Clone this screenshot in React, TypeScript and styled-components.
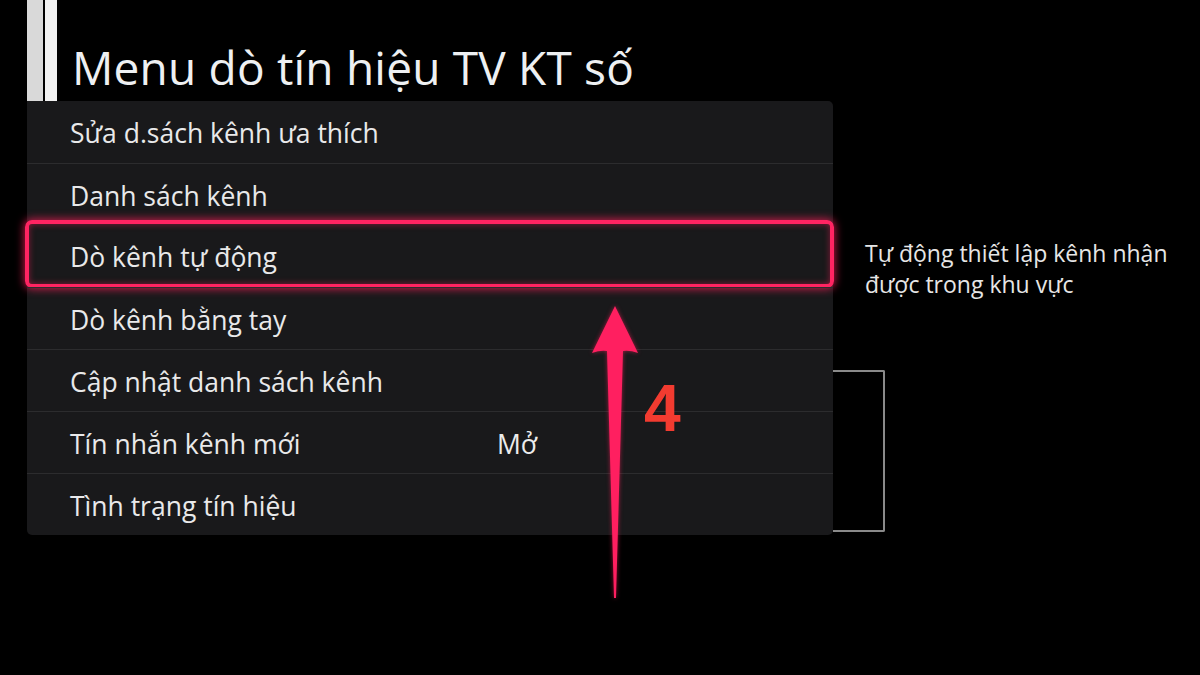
import { createGlobalStyle, styled } from 'styled-components';

const GlobalStyle = createGlobalStyle`
  html, body {
    margin: 0;
    padding: 0;
    background: #000;
  }
  body {
    font-family: 'Open Sans', 'Noto Sans', sans-serif;
  }
`;

const Screen = styled.div`
  width: 1200px;
  height: 675px;
  background: #000;
  position: relative;
  overflow: hidden;
  padding-left: 27px;
  box-sizing: border-box;
`;

const Header = styled.header`
  height: 101px;
  display: flex;
  align-items: flex-end;
`;

const Bar = styled.div<{ $w: number; $color: string }>`
  width: ${(p) => p.$w}px;
  height: 100%;
  background: ${(p) => p.$color};
  margin-right: 2px;
`;

const Title = styled.h1`
  margin: 0 0 6px 13px;
  font-size: 46px;
  font-weight: 400;
  line-height: 1.2;
  color: #eef0f2;
  letter-spacing: 0.2px;
`;

const Body = styled.div`
  display: flex;
  align-items: flex-start;
`;

const Panel = styled.ul`
  list-style: none;
  margin: 0;
  padding: 0;
  width: 806px;
  background: #19191b;
  border-radius: 0 5px 5px 5px;
`;

const Row = styled.li<{ $active?: boolean }>`
  position: relative;
  box-sizing: border-box;
  height: 62px;
  display: flex;
  align-items: center;
  padding: 2px 0 0 43px;
  font-size: 26.5px;
  color: #e9e9ea;
  border-top: ${(p) => (p.$active ? 'none' : '1px solid #2c2c2e')};

  &:first-child {
    border-top: none;
  }

  ${(p) =>
    p.$active &&
    `
    &::after {
      content: '';
      position: absolute;
      top: -5px;
      left: -2px;
      right: -1px;
      bottom: -1px;
      border: 4px solid #ff2462;
      border-radius: 7px;
      box-shadow: 0 0 8px 1px rgba(255, 30, 90, 0.75), inset 0 0 6px rgba(255, 30, 90, 0.5);
    }
  `}
`;

const Label = styled.span`
  width: 427px;
`;

const Value = styled.span`
  color: #ececec;
`;

const Side = styled.aside`
  display: flex;
  flex-direction: column;
  padding-top: 137px;
`;

const Hint = styled.p`
  margin: 0 0 0 32px;
  font-size: 23px;
  line-height: 31px;
  color: #e6e6e6;
  width: 330px;
`;

const Bracket = styled.div`
  margin-top: 70px;
  width: 50px;
  height: 158px;
  border: 2px solid #8a8a8a;
  border-left: none;
  border-radius: 0 2px 2px 0;
`;

const Arrow = styled.svg`
  position: absolute;
  left: 0;
  top: 0;
  pointer-events: none;
  filter: drop-shadow(0 0 2px rgba(255, 30, 90, 0.6));
`;

const Step = styled.span`
  position: absolute;
  left: 644px;
  top: 375px;
  font-family: 'Liberation Sans', Arial, sans-serif;
  font-weight: 700;
  font-size: 66px;
  line-height: 1;
  color: #f23b30;
`;

const items = [
  { label: 'Sửa d.sách kênh ưa thích' },
  { label: 'Danh sách kênh' },
  { label: 'Dò kênh tự động', active: true },
  { label: 'Dò kênh bằng tay' },
  { label: 'Cập nhật danh sách kênh' },
  { label: 'Tín nhắn kênh mới', value: 'Mở' },
  { label: 'Tình trạng tín hiệu' },
];

export default function App() {
  return (
    <Screen>
      <GlobalStyle />
      <Header>
        <Bar $w={16} $color="#d9d9d9" />
        <Bar $w={12} $color="#f2f2f2" />
        <Title>Menu dò tín hiệu TV KT số</Title>
      </Header>
      <Body>
        <Panel>
          {items.map((it) => (
            <Row key={it.label} $active={it.active}>
              <Label>{it.label}</Label>
              {it.value && <Value>{it.value}</Value>}
            </Row>
          ))}
        </Panel>
        <Side>
          <Hint>
            Tự động thiết lập kênh nhận
            <br />
            được trong khu vực
          </Hint>
          <Bracket />
        </Side>
      </Body>
      <Arrow width="1200" height="675" viewBox="0 0 1200 675">
        <path
          d="M615 306 L638 353 Q630 350 623 351 L616 598 L614 598 L607 351 Q600 350 592 353 Z"
          fill="#ff1f60"
        />
      </Arrow>
      <Step>4</Step>
    </Screen>
  );
}
